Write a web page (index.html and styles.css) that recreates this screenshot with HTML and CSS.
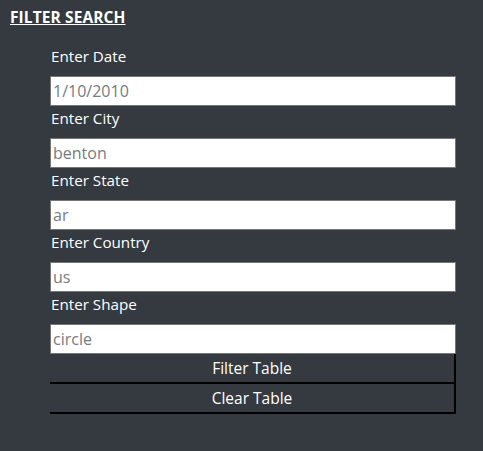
FILE: index.html
```html
<!DOCTYPE html>
<html>
<head>
<meta charset="utf-8">
<link rel="stylesheet" href="styles.css">
</head>
<body>
<div class="panel">
  <h3 class="title">FILTER SEARCH</h3>
  <form class="filters">
    <label class="lbl" for="d">Enter Date</label>
    <input class="field" id="d" type="text" placeholder="1/10/2010">
    <label class="lbl" for="c">Enter City</label>
    <input class="field" id="c" type="text" placeholder="benton">
    <label class="lbl" for="s">Enter State</label>
    <input class="field" id="s" type="text" placeholder="ar">
    <label class="lbl" for="co">Enter Country</label>
    <input class="field" id="co" type="text" placeholder="us">
    <label class="lbl" for="sh">Enter Shape</label>
    <input class="field" id="sh" type="text" placeholder="circle">
    <button class="btn" type="button">Filter Table</button>
    <button class="btn" type="button">Clear Table</button>
  </form>
</div>
</body>
</html>
```

FILE: styles.css
```css
html, body {
  margin: 0;
  padding: 0;
  background: #343a40;
  height: 100%;
}
body {
  font-family: "Open Sans", "Noto Sans", sans-serif;
  color: #fff;
}
.panel {
  padding: 7px 10px;
}
.title {
  margin: 0;
  font-size: 15.5px;
  font-weight: 700;
  line-height: 20px;
  text-decoration: underline;
  height: 37px;
  letter-spacing: 0.1px;
}
.filters {
  display: flex;
  flex-direction: column;
  margin-left: 40px;
  width: 406px;
}
.lbl {
  display: block;
  height: 32px;
  line-height: 24px;
  font-size: 15.2px;
  padding-left: 1px;
}
.field {
  box-sizing: border-box;
  height: 30px;
  margin: 0;
  border: 1px solid #767676;
  padding: 0 2px;
  font-family: inherit;
  font-size: 16px;
  background: #fff;
}
.field::placeholder {
  color: #757b82;
  opacity: 1;
}
.btn {
  box-sizing: border-box;
  height: 30px;
  margin: 0;
  padding: 0;
  background: #343a40;
  color: #fff;
  border: none;
  border-right: 2px solid #000;
  border-bottom: 2px solid #000;
  font-family: inherit;
  font-size: 15.5px;
}
```
